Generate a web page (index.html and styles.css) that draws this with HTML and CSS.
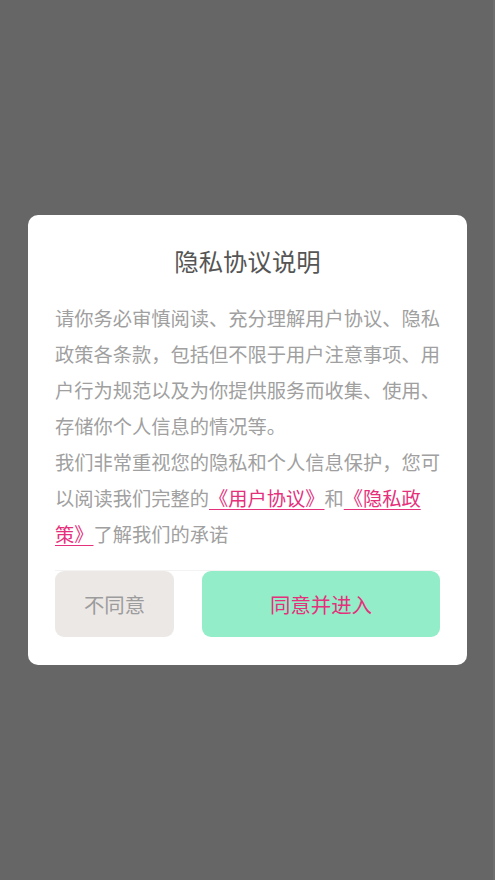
FILE: index.html
```html
<!DOCTYPE html>
<html lang="zh-CN">
<head>
<meta charset="utf-8">
<title>隐私协议说明</title>
<link rel="stylesheet" href="styles.css">
</head>
<body>
<div class="overlay">
  <div class="dialog">
    <h1 class="title">隐私协议说明</h1>
    <div class="content">
      <p>请你务必审慎阅读、充分理解用户协议、隐私政策各条款，包括但不限于用户注意事项、用户行为规范以及为你提供服务而收集、使用、存储你个人信息的情况等。</p>
      <p>我们非常重视您的隐私和个人信息保护，您可以阅读我们完整的<a class="link" href="#">《用户协议》</a>和<a class="link" href="#">《隐私政策》</a>了解我们的承诺</p>
    </div>
    <div class="actions">
      <button class="btn btn-decline">不同意</button>
      <button class="btn btn-accept">同意并进入</button>
    </div>
  </div>
</div>
</body>
</html>
```

FILE: styles.css
```css
html, body {
  margin: 0;
  padding: 0;
  height: 100%;
}

body {
  background: #666666;
  font-family: "Noto Sans CJK SC", "Noto Sans", sans-serif;
}

.overlay {
  height: 100%;
  display: flex;
  align-items: center;
  justify-content: center;
  border-right: 2px solid #6e6e6e;
  box-sizing: border-box;
}

.dialog {
  width: 439px;
  margin-left: 2px;
  box-sizing: border-box;
  background: #ffffff;
  border-radius: 10px;
  padding: 28px 27px 28px;
}

.title {
  margin: 0;
  font-size: 24.4px;
  font-weight: 400;
  line-height: 36px;
  color: #555555;
  text-align: center;
}

.content {
  margin-top: 21px;
  font-size: 19.25px;
  line-height: 36px;
  color: #a0a0a0;
}

.content p {
  margin: 0;
}

.link {
  color: #e5307c;
  text-decoration: underline;
  text-underline-offset: 3px;
}

.actions {
  margin-top: 18px;
  border-top: 1px solid #f3f3f3;
  display: flex;
  gap: 28px;
}

.btn {
  height: 66px;
  border: none;
  border-radius: 9px;
  font-family: inherit;
  font-size: 20.4px;
  padding: 0;
}

.btn-decline {
  flex: 1;
  background: #ece8e6;
  color: #9c9c9c;
}

.btn-accept {
  flex: 2;
  background: #93edc8;
  color: #e5307c;
}
```
